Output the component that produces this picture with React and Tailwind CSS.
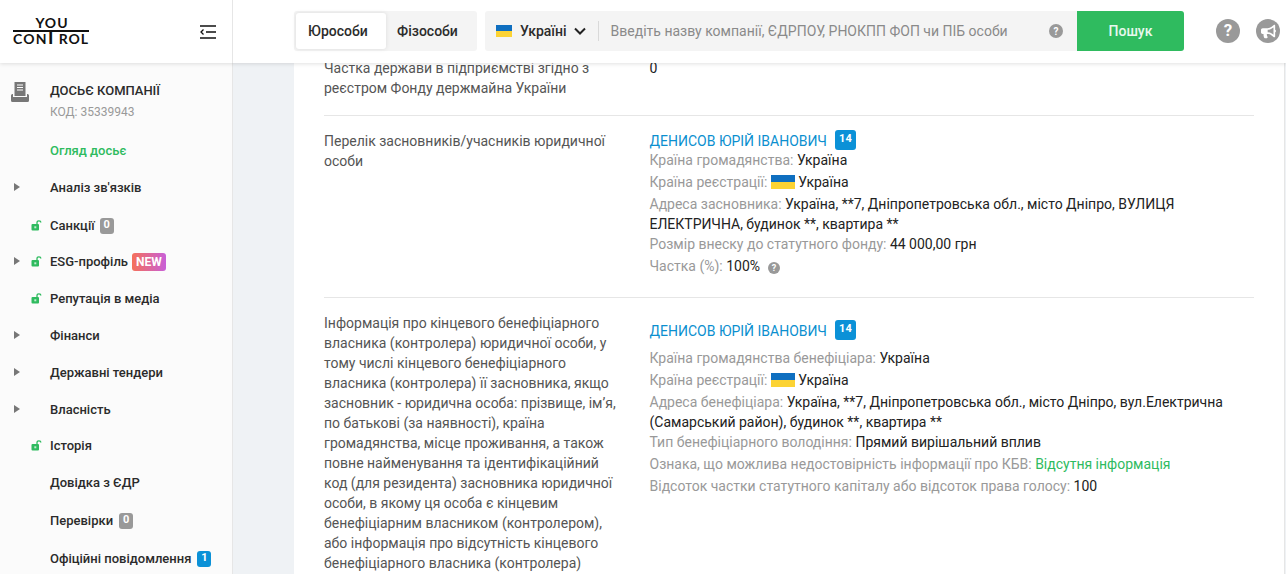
import React from "react";
import { FaBullhorn } from "react-icons/fa";

const Flag = ({ w = 24, h = 14 }) => (
  <svg width={w} height={h} viewBox="0 0 24 14" preserveAspectRatio="none" className="inline-block shrink-0 align-[-2px]">
    <rect width="24" height="7" fill="#0f6fc0" />
    <rect y="7" width="24" height="7" fill="#fcd334" />
  </svg>
);

const Lock = () => (
  <svg width="11" height="11" viewBox="0 0 11 11" className="-mt-[1px] shrink-0">
    <path d="M6 4V2.600C6 1.400 6.900.8 7.900.8s1.900.6 1.900 1.800" fill="none" stroke="#2fbb5f" strokeWidth="1.300" />
    <rect x="0.5" y="4" width="7.500" height="6.500" rx="1" fill="#2fbb5f" />
    <rect x="3.300" y="6.300" width="2" height="2" fill="#fff" opacity="0.7" />
  </svg>
);

const Caret = () => (
  <svg width="6" height="8" viewBox="0 0 6 8" className="-mt-[2px]"><path d="M0 0l6 4-6 4z" fill="#777" /></svg>
);

const NavItem = ({ arrow, lock, label, green, children, className = "" }) => (
  <div className={`flex h-[37px] items-center ${className}`}>
    <div className="ml-[14px] flex w-[14px] items-center">{arrow && <Caret />}</div>
    <div className="ml-[3px] flex w-[19px] items-center">{lock && <Lock />}</div>
    <span className={`text-[13px] font-medium ${green ? "text-[#2fbb5f]" : "text-[#2b2b2b]"}`}>{label}</span>
    {children}
  </div>
);

const Count = ({ n, blue, className = "ml-[5px]" }) => (
  <span className={`inline-flex h-[16px] min-w-[14px] items-center justify-center rounded-[3px] px-[3px] text-[11px] font-bold text-white ${blue ? "bg-[#0b91d7]" : "bg-[#999999]"} ${className}`}>{n}</span>
);

const Field = ({ k, children, className = "" }) => (
  <p className={`text-[14px] leading-[20px] text-[#222] ${className}`}>
    <span className="text-[#999]">{k} </span>{children}
  </p>
);

const Person = () => (
  <div className="flex h-[19px] items-center">
    <span className="text-[14px] leading-[20px] text-[#0b8fcf]">ДЕНИСОВ ЮРІЙ ІВАНОВИЧ</span>
    <span className="-mt-[2px] ml-[8px] flex h-[20px] w-[21px] items-center justify-center rounded-[3px] bg-[#0b91d7] text-[11px] font-bold text-white">14</span>
  </div>
);

export default function App() {
  return (
    <div className="flex h-[574px] w-[1286px] flex-col overflow-hidden bg-[#eff2f5] font-['Roboto',sans-serif]">
      <header className="relative z-10 flex h-[63px] shrink-0 items-center bg-white pb-[1px] shadow-[0_1px_4px_rgba(0,0,0,0.12)]">
        <div className="-mb-[1px] flex h-[63px] w-[233px] shrink-0 items-center border-r border-[#e6e6e6]">
          <div className="-mt-[2px] ml-[13px] flex w-[76px] flex-col items-center text-[#111]">
            <span className="pl-[2px] font-['Lato',sans-serif] text-[14px] leading-[13px] font-bold tracking-[1px]">YOU</span>
            <span className="mt-[1px] block h-[2px] w-full bg-[#111]" />
            <span className="mt-[1px] flex h-[12px] w-full items-start font-['Lato',sans-serif] text-[14px] leading-[12px] font-bold whitespace-nowrap">
              <span className="w-[32px] tracking-[1.2px]">CON</span>
              <span className="w-[12px] -mt-[5px] text-[19px] leading-[18px]">T</span>
              <span className="ml-auto tracking-[0.9px]">ROL</span>
            </span>
          </div>
          <svg width="16" height="14" viewBox="0 0 16 14" className="ml-[111px]" fill="none">
            <path d="M0 1h16M6 7h10M0 13h16" stroke="#111" strokeWidth="1.500" />
            <path d="M3.500 4.500L1 7l2.500 2.500" stroke="#111" strokeWidth="1.300" />
          </svg>
        </div>
        <div className="ml-[61px] flex h-[40px] w-[183px] items-center rounded-[3px] bg-[#f4f4f4] p-[2px]">
          <div className="flex h-[36px] w-[90px] items-center rounded-[3px] bg-white pl-[12px] text-[14px] font-medium text-[#2b2b2b] shadow-[0_0_4px_rgba(0,0,0,0.1)]">Юрособи</div>
          <div className="flex h-[36px] flex-1 items-center pl-[11px] text-[14px] font-medium text-[#2b2b2b]">Фізособи</div>
        </div>
        <div className="ml-[8px] flex h-[40px] w-[592px] items-center rounded-l-[3px] bg-[#f4f4f4]">
          <span className="ml-[11px] flex"><Flag w={16} h={12} /></span>
          <span className="ml-[8px] text-[14px] font-medium text-[#2b2b2b]">Україні</span>
          <svg width="12" height="8" viewBox="0 0 12 8" className="ml-[7px]" fill="none"><path d="M1 1.500l5 5 5-5" stroke="#222" strokeWidth="2" /></svg>
          <span className="ml-[12px] h-[20px] w-[1px] bg-[#d9d9d9]" />
          <span className="ml-[12px] text-[14px] whitespace-nowrap text-[#8a8a8a]">Введіть назву компанії, ЄДРПОУ, РНОКПП ФОП чи ПІБ особи</span>
          <span className="mr-[14px] ml-auto flex h-[14px] w-[14px] items-center justify-center rounded-full bg-[#999] text-[10px] font-bold text-white">?</span>
        </div>
        <div className="flex h-[40px] w-[107px] items-center justify-center rounded-r-[3px] bg-[#2fbb5f] text-[14px] font-medium text-[#e8f8ee]">Пошук</div>
        <span className="ml-[32px] flex h-[24px] w-[24px] items-center justify-center rounded-full bg-[#999] text-[17px] font-bold text-white">?</span>
        <span className="ml-[16px] flex h-[24px] w-[24px] items-center justify-center rounded-full bg-[#999] text-white"><FaBullhorn size={15} /></span>
      </header>

      <div className="flex min-h-0 flex-1">
        <aside className="w-[233px] shrink-0 border-r border-[#e6e6e6] bg-[#fbfbfb]">
          <div className="flex pt-[18px]">
            <svg width="18" height="20" viewBox="0 0 18 20" className="mt-[1px] ml-[11px] shrink-0">
              <path d="M1.500 12H16.500A1.500 1.500 0 0 1 18 13.500V18.500A1.500 1.500 0 0 1 16.500 20H1.500A1.500 1.500 0 0 1 0 18.500V13.500A1.500 1.500 0 0 1 1.500 12z" fill="#777" />
              <rect x="2" y="-0.500" width="14" height="15.500" fill="#fbfbfb" />
              <path d="M3.500 0h11v14h-11z" fill="#777" />
              <path d="M6 3h6M6 5.500h6M6 8h6" stroke="#fff" strokeWidth="1.200" />
            </svg>
            <div className="ml-[21px]">
              <div className="text-[13px] leading-[20px] font-medium text-[#2b2b2b]">ДОСЬЄ КОМПАНІЇ</div>
              <div className="mt-[1px] text-[12px] leading-[20px] text-[#999]">КОД: 35339943</div>
            </div>
          </div>
          <div className="mt-[10px]">
            <NavItem label="Огляд досьє" green />
            <NavItem arrow label="Аналіз зв'язків" />
            <NavItem lock label="Санкції" className="mt-[1px]"><Count n="0" /></NavItem>
            <NavItem arrow lock label="ESG-профіль" className="-mt-[1px]">
              <span className="ml-[4px] flex h-[18px] items-center rounded-[3px] bg-[linear-gradient(90deg,#f5705a,#c85fd8)] px-[4px] text-[12px] font-bold text-white">NEW</span>
            </NavItem>
            <NavItem lock label="Репутація в медіа" />
            <NavItem arrow label="Фінанси" />
            <NavItem arrow label="Державні тендери" />
            <NavItem arrow label="Власність" />
            <NavItem lock label="Історія" className="-mt-[1px]" />
            <NavItem label="Довідка з ЄДР" />
            <NavItem label="Перевірки" className="mt-[1px]"><Count n="0" className="ml-[6px]" /></NavItem>
            <NavItem label="Офіційні повідомлення" className="mt-[1px]"><Count n="1" blue className="ml-[6px]" /></NavItem>
          </div>
        </aside>

        <main className="ml-[61px] w-[991px] shrink-0 overflow-hidden border-r border-[#e6e6e6] bg-white px-[30px]">
          <div className="-mt-[5px] flex border-b border-[#e6e6e6] pb-[17px]">
            <div className="w-[325.500px] shrink-0 pr-[30px] text-[14px] leading-[20px] text-[#555]">Частка держави в підприємстві згідно з реєстром Фонду держмайна України</div>
            <div className="text-[14px] leading-[20px] text-[#222]">0</div>
          </div>
          <div className="flex border-b border-[#e6e6e6] pt-[15px] pb-[21px]">
            <div className="w-[325.500px] shrink-0 pr-[30px] text-[14px] leading-[20px] text-[#555]">Перелік засновників/учасників юридичної особи</div>
            <div className="min-w-0 flex-1">
              <Person />
              <Field k="Країна громадянства:">Україна</Field>
              <Field k="Країна реєстрації:" className="mt-[2px]"><Flag /> Україна</Field>
              <Field k="Адреса засновника:" className="mt-[2px]">Україна, **7, Дніпропетровська обл., місто Дніпро, ВУЛИЦЯ ЕЛЕКТРИЧНА, будинок **, квартира **</Field>
              <Field k="Розмір внеску до статутного фонду:">44 000,00 грн</Field>
              <Field k="Частка (%):" className="mt-[2px]">100%<span className="ml-[8px] inline-flex h-[12px] w-[12px] items-center justify-center rounded-full bg-[#999] align-[0px] text-[9px] font-bold text-white">?</span></Field>
            </div>
          </div>
          <div className="flex pt-[15px]">
            <div className="w-[325.500px] shrink-0 pr-[30px] text-[14px] leading-[20px] text-[#555]">Інформація про кінцевого бенефіціарного власника (контролера) юридичної особи, у тому числі кінцевого бенефіціарного власника (контролера) її засновника, якщо засновник - юридична особа: прізвище, ім’я, по батькові (за наявності), країна громадянства, місце проживання, а також повне найменування та ідентифікаційний код (для резидента) засновника юридичної особи, в якому ця особа є кінцевим бенефіціарним власником (контролером), або інформація про відсутність кінцевого бенефіціарного власника (контролера)</div>
            <div className="min-w-0 flex-1 pt-[8px]">
              <Person />
              <Field k="Країна громадянства бенефіціара:" className="mt-[8px]">Україна</Field>
              <Field k="Країна реєстрації:" className="mt-[2px]"><Flag /> Україна</Field>
              <Field k="Адреса бенефіціара:" className="mt-[2px]">Україна, **7, Дніпропетровська обл., місто Дніпро, вул.Електрична (Самарський район), будинок **, квартира **</Field>
              <Field k="Тип бенефіціарного володіння:">Прямий вирішальний вплив</Field>
              <Field k="Ознака, що можлива недостовірність інформації про КБВ:" className="mt-[2px]"><span className="text-[#2fbb5f]">Відсутня інформація</span></Field>
              <Field k="Відсоток частки статутного капіталу або відсоток права голосу:" className="mt-[2px]">100</Field>
            </div>
          </div>
        </main>
      </div>
    </div>
  );
}
